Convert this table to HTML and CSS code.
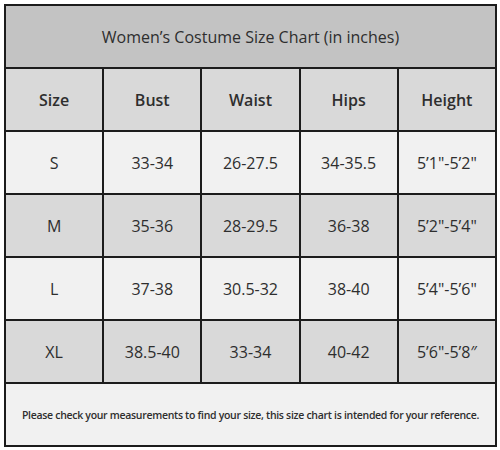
FILE: index.html
```html
<!DOCTYPE html>
<html lang="en">
<head>
    <meta charset="UTF-8" />
    <title>Women's Costume Size Chart</title>
    <link rel="stylesheet" href="styles.css">
</head>
<body>
    <table class="size-chart">
        <tr class="title-row">
            <td colspan="5">Women’s Costume Size Chart (in inches)</td>
        </tr>
        <tr class="head-row">
            <th>Size</th>
            <th>Bust</th>
            <th>Waist</th>
            <th>Hips</th>
            <th>Height</th>
        </tr>
        <tr class="light">
            <td>S</td>
            <td>33-34</td>
            <td>26-27.5</td>
            <td>34-35.5</td>
            <td>5’1"-5’2"</td>
        </tr>
        <tr class="dark">
            <td>M</td>
            <td>35-36</td>
            <td>28-29.5</td>
            <td>36-38</td>
            <td>5’2"-5’4"</td>
        </tr>
        <tr class="light">
            <td>L</td>
            <td>37-38</td>
            <td>30.5-32</td>
            <td>38-40</td>
            <td>5’4"-5’6"</td>
        </tr>
        <tr class="dark">
            <td>XL</td>
            <td>38.5-40</td>
            <td>33-34</td>
            <td>40-42</td>
            <td>5’6"-5’8″</td>
        </tr>
        <tr class="note-row">
            <td colspan="5">Please check your measurements to find your size, this size chart is intended for your reference.</td>
        </tr>
    </table>
</body>
</html>
```

FILE: styles.css
```css
* {
    margin: 0;
    padding: 0;
    box-sizing: border-box;
}

body {
    font-family: "Open Sans", Arial, sans-serif;
    background-color: #fff;
    padding: 4px 0 0 4px;
}

.size-chart {
    width: 493px;
    border-collapse: collapse;
    border: 2px solid #1c1c1c;
    color: #2e2e2e;
}

.size-chart td,
.size-chart th {
    border: 2px solid #1c1c1c;
    height: 63px;
    width: 20%;
    text-align: center;
    vertical-align: middle;
    font-size: 16px;
    font-weight: normal;
}

.title-row td {
    background-color: #c3c3c3;
    font-size: 16px;
}

.head-row th {
    background-color: #d9d9d9;
    font-weight: 600;
}

.light td {
    background-color: #f1f1f1;
}

.dark td {
    background-color: #d9d9d9;
}

.note-row td {
    background-color: #f1f1f1;
    font-size: 10.5px;
    font-weight: 600;
    letter-spacing: -0.3px;
}
```
